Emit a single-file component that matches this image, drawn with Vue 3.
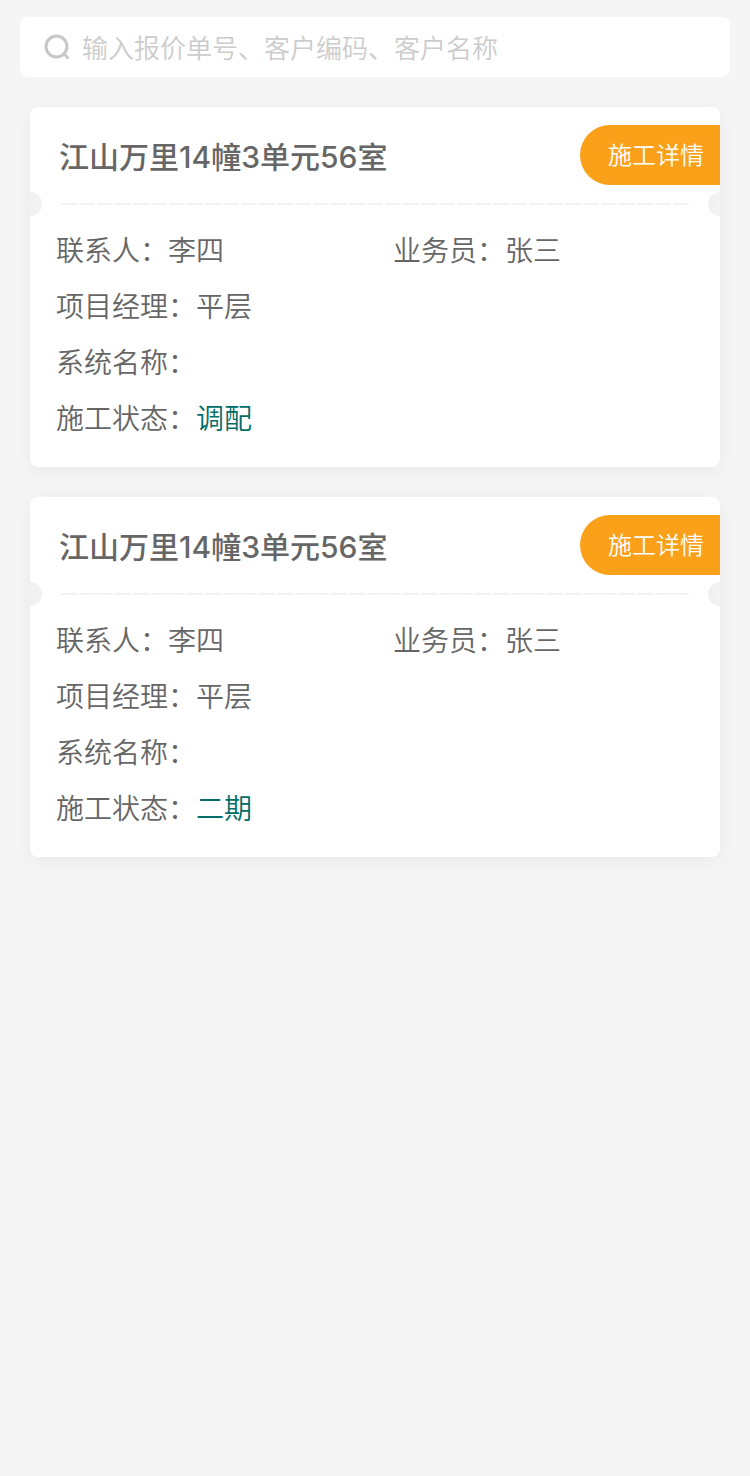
<script setup>
const cards = [
  { id: 1, title: '江山万里14幢3单元56室', contact: '李四', sales: '张三', manager: '平层', system: '', status: '调配' },
  { id: 2, title: '江山万里14幢3单元56室', contact: '李四', sales: '张三', manager: '平层', system: '', status: '二期' }
]
</script>

<template>
  <main class="page">
    <form class="search" role="search" @submit.prevent>
      <svg class="search-icon" viewBox="0 0 26 26" fill="none" aria-hidden="true">
        <circle cx="12.5" cy="12.5" r="10.5" />
        <path d="M19.5 19.5l5 5" />
      </svg>
      <input class="search-input" type="text" aria-label="搜索" placeholder="输入报价单号、客户编码、客户名称">
    </form>
    <section v-for="card in cards" :key="card.id" class="card">
      <header class="card-head">
        <h2 class="title">{{ card.title }}</h2>
        <button class="detail" type="button">施工详情</button>
      </header>
      <div class="divider">
        <svg class="dashes" aria-hidden="true"><line x1="1" y1="1" x2="100%" y2="1" /></svg>
      </div>
      <div class="info">
        <p class="row">
          <span>联系人：{{ card.contact }}</span>
          <span>业务员：{{ card.sales }}</span>
        </p>
        <p class="row">项目经理：{{ card.manager }}</p>
        <p class="row">系统名称：{{ card.system }}</p>
        <p class="row"><span>施工状态：<span class="status">{{ card.status }}</span></span></p>
      </div>
    </section>
  </main>
</template>

<style>
body {
  background: #f5f5f5;
}
</style>

<style scoped>
.page {
  box-sizing: border-box;
  min-height: 100vh;
  padding: 17px 20px 30px;
  color: #666;
  font-family: "Liberation Sans", "Noto Sans CJK SC", sans-serif;
}
.search {
  display: flex;
  align-items: center;
  gap: 12px;
  height: 60px;
  padding: 0 24px;
  box-sizing: border-box;
  background: #fff;
  border-radius: 8px;
}
.search-icon {
  flex: none;
  width: 26px;
  height: 26px;
  stroke: #c8c8c8;
  stroke-width: 3;
}
.search-input {
  flex: 1;
  min-width: 0;
  height: 44px;
  padding: 4px 0 0;
  box-sizing: border-box;
  border: 0;
  outline: 0;
  background: none;
  color: #666;
  font: 350 26px "Liberation Sans", "Noto Sans CJK SC", sans-serif;
}
.search-input::placeholder {
  color: #ccc;
  opacity: 1;
}
.card {
  margin: 30px 10px 0;
  padding-bottom: 19px;
  background: #fff;
  border-radius: 8px;
  box-shadow: 0 4px 20px rgba(0, 0, 0, 0.05);
}
.card-head {
  display: flex;
  align-items: center;
  justify-content: space-between;
  padding: 18px 0 7px 29px;
}
.title {
  margin: 0;
  padding-top: 4px;
  font-family: Inter, "Noto Sans CJK SC", sans-serif;
  font-size: 30px;
  line-height: 56px;
  font-weight: 500;
}
.detail {
  width: 140px;
  height: 60px;
  padding: 0 0 4px 12px;
  border: 0;
  border-radius: 30px 0 0 30px;
  background: #faa019;
  color: #fff;
  font: 350 24px "Liberation Sans", "Noto Sans CJK SC", sans-serif;
}
.divider {
  display: flex;
  align-items: center;
  justify-content: space-between;
  height: 24px;
}
.divider::before,
.divider::after {
  content: "";
  width: 12px;
  height: 24px;
  background: linear-gradient(to right, #f0f0f0, #f3f3f3);
  border-radius: 0 12px 12px 0;
}
.divider::after {
  background: linear-gradient(to left, #f3f3f3, #f0f0f0);
  border-radius: 12px 0 0 12px;
}
.dashes {
  flex: 1;
  height: 2px;
  margin: 0 18px;
  stroke: #f2f2f2;
  stroke-width: 2;
  stroke-dasharray: 16 2;
}
.info {
  padding: 8px 26px 0;
  font-size: 28px;
  font-weight: 350;
  line-height: 56px;
}
.row {
  display: grid;
  grid-template-columns: 337fr 301fr;
  margin: 0;
}
.status {
  color: #006e68;
}
</style>
